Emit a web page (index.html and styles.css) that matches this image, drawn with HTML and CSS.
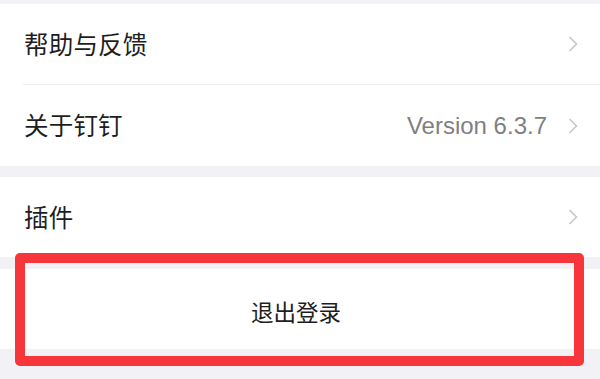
FILE: index.html
```html
<!DOCTYPE html>
<html lang="zh">
<head>
<meta charset="utf-8">
<link rel="stylesheet" href="styles.css">
</head>
<body>
<div class="page">
  <div class="group">
    <div class="row">
      <span class="label">帮助与反馈</span>
      <span class="right">
        <svg class="chev" width="10" height="16" viewBox="0 0 10 16"><polyline points="1.5,1 8.5,8 1.5,15" fill="none" stroke="#c6c6cb" stroke-width="1.6"/></svg>
      </span>
    </div>
    <div class="divider"></div>
    <div class="row row-tall">
      <span class="label">关于钉钉</span>
      <span class="right">
        <span class="value">Version 6.3.7</span>
        <svg class="chev" width="10" height="16" viewBox="0 0 10 16"><polyline points="1.5,1 8.5,8 1.5,15" fill="none" stroke="#c6c6cb" stroke-width="1.6"/></svg>
      </span>
    </div>
  </div>
  <div class="group group-plugin">
    <div class="row">
      <span class="label">插件</span>
      <span class="right">
        <svg class="chev" width="10" height="16" viewBox="0 0 10 16"><polyline points="1.5,1 8.5,8 1.5,15" fill="none" stroke="#c6c6cb" stroke-width="1.6"/></svg>
      </span>
    </div>
  </div>
  <div class="group group-logout">
    <div class="logout">退出登录</div>
  </div>
  <div class="highlight"></div>
</div>
</body>
</html>
```
FILE: styles.css
```css
* { box-sizing: border-box; }
html, body {
  margin: 0;
  padding: 0;
  background: #f2f2f6;
}
body {
  font-family: "Noto Sans CJK SC", "Liberation Sans", sans-serif;
  color: #1e1e1e;
}
.page {
  position: relative;
  width: 600px;
  height: 379px;
  padding-top: 4px;
  overflow: hidden;
}
.group {
  background: #ffffff;
}
.group-plugin {
  margin-top: 11px;
}
.group-logout {
  margin-top: 12px;
}
.row {
  height: 80px;
  display: flex;
  align-items: center;
  justify-content: space-between;
  padding: 0 22px 0 24px;
}
.row-tall {
  height: 81px;
}
.divider {
  height: 1px;
  margin-left: 23px;
  background: #ececef;
}
.label {
  font-size: 24.5px;
  line-height: 1;
  letter-spacing: 0.2px;
}
.right {
  display: flex;
  align-items: center;
  gap: 21px;
}
.value {
  font-family: "Liberation Sans", "Noto Sans CJK SC", sans-serif;
  font-size: 24px;
  color: #7f7f83;
  line-height: 1;
}
.chev {
  display: block;
}
.logout {
  height: 80px;
  display: flex;
  align-items: center;
  justify-content: center;
  font-size: 22.5px;
  padding-right: 8px;
  padding-top: 4px;
}
.highlight {
  position: absolute;
  left: 15px;
  top: 253px;
  width: 569px;
  height: 113px;
  border: 10px solid #f6363a;
  border-radius: 5px;
}
```
